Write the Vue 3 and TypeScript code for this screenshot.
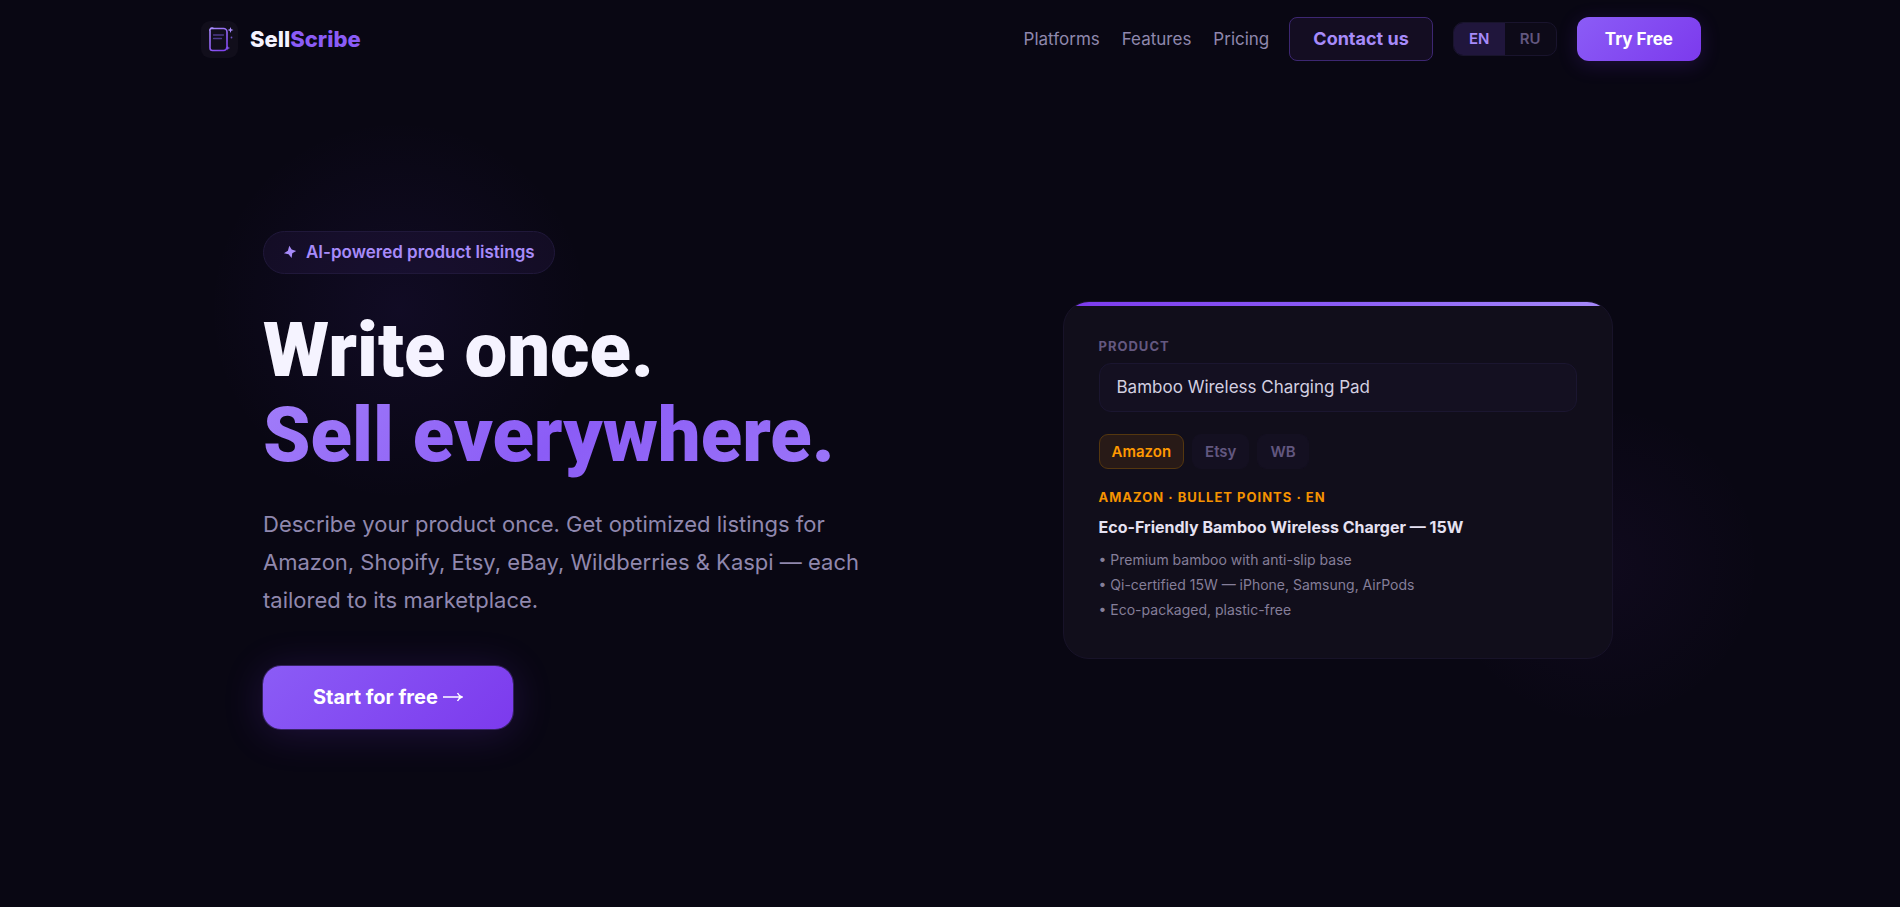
<script setup lang="ts">
import { ref } from 'vue'

type Lang = 'EN' | 'RU'
type Market = 'Amazon' | 'Etsy' | 'WB'

const links: string[] = ['Platforms', 'Features', 'Pricing']
const langs: Lang[] = ['EN', 'RU']
const markets: Market[] = ['Amazon', 'Etsy', 'WB']
const bullets: string[] = [
  'Premium bamboo with anti-slip base',
  'Qi-certified 15W — iPhone, Samsung, AirPods',
  'Eco-packaged, plastic-free',
]

const lang = ref<Lang>('EN')
const market = ref<Market>('Amazon')
const product = ref('Bamboo Wireless Charging Pad')
</script>

<template>
  <div class="page">
    <header class="header">
      <a class="brand" href="#">
        <span class="brand-tile">
          <svg viewBox="0 0 36 36" width="36" height="36" fill="none" aria-hidden="true">
            <defs>
              <linearGradient id="doc" x1="8" y1="6" x2="26" y2="31" gradientUnits="userSpaceOnUse">
                <stop stop-color="#a78bfa" />
                <stop offset="1" stop-color="#7c3aed" />
              </linearGradient>
            </defs>
            <path
              d="M9 7.500H21.500a3.500 3.500 0 0 1 3.500 3.500v15a3.500 3.500 0 0 1-3.500 3.500H10.500A2.500 2.500 0 0 1 8 27V10a2 2 0 0 1 1-2.500z"
              stroke="url(#doc)" stroke-width="1.6"
            />
            <path d="M8.500 8.500C8.500 6.500 11 6.500 11.500 8" stroke="#a78bfa" stroke-width="1.2" />
            <path d="M11.500 14H21.500M11.500 17.500H19.500" stroke="#4c3a8a" stroke-width="1.3" stroke-linecap="round" />
            <path d="M28.500 6l.8 2.200 2.200.8-2.200.8-.8 2.200-.8-2.200-2.200-.8 2.200-.8z" fill="#a78bfa" />
            <path d="M25.800 24.500l.6 1.900 1.900.6-1.900.6-.6 1.900-.6-1.900-1.900-.6 1.900-.6z" fill="#8b5cf6" />
            <circle cx="29.500" cy="16.500" r="0.9" fill="#6d4fc0" />
          </svg>
        </span>
        <span class="brand-name">Sell<span class="brand-accent">Scribe</span></span>
      </a>
      <div class="actions">
        <nav class="nav">
          <a v-for="link in links" :key="link" :href="'#' + link.toLowerCase()">{{ link }}</a>
        </nav>
        <a class="contact" href="#contact">Contact us</a>
        <div class="langs" role="group" aria-label="Language">
          <button
            v-for="item in langs" :key="item" type="button"
            :class="{ active: lang === item }" :aria-pressed="lang === item" @click="lang = item"
          >{{ item }}</button>
        </div>
        <a class="try" href="#start">Try Free</a>
      </div>
    </header>

    <main class="hero">
      <section class="intro">
        <p class="badge">
          <svg viewBox="0 0 14 14" width="14" height="14" aria-hidden="true">
            <path d="M6.300.8L8.700 4.600 13.200 6 9.300 8.200 8.600 13 5.600 9.300.9 8.300 4.900 5.700z" fill="#a78bfa" />
          </svg>
          <span>AI-powered product listings</span>
        </p>
        <h1>
          <span class="line">Write once.</span>
          <span class="line gradient">Sell everywhere.</span>
        </h1>
        <p class="lead">
          Describe your product once. Get optimized listings for Amazon, Shopify, Etsy, eBay,
          Wildberries &amp; Kaspi — each tailored to its marketplace.
        </p>
        <a class="cta" href="#start">
          <span>Start for free</span>
          <svg viewBox="0 0 20 12" width="20" height="12" fill="none" stroke="currentColor" stroke-width="1.4" aria-hidden="true">
            <path d="M0 6H18.500M14.500 2C15.500 4 16.800 5.400 19 6 16.800 6.600 15.500 8 14.500 10" />
          </svg>
        </a>
      </section>

      <section class="card">
        <label class="label" for="product">PRODUCT</label>
        <input id="product" v-model="product" class="field" type="text" />
        <div class="markets" role="group" aria-label="Marketplace">
          <button
            v-for="item in markets" :key="item" type="button"
            :class="{ active: market === item }" :aria-pressed="market === item" @click="market = item"
          >{{ item }}</button>
        </div>
        <p class="format">AMAZON · BULLET POINTS · EN</p>
        <h2>Eco-Friendly Bamboo Wireless Charger — 15W</h2>
        <ul>
          <li v-for="text in bullets" :key="text">• {{ text }}</li>
        </ul>
      </section>
    </main>
  </div>
</template>

<style>
body {
  margin: 0;
  background: #090713;
}
</style>

<style scoped>
.page {
  box-sizing: border-box;
  min-height: 100vh;
  display: flex;
  flex-direction: column;
  background: #090713;
  color: #f5f3ff;
  font-family: Inter, "Liberation Sans", sans-serif;
}

a {
  color: inherit;
  text-decoration: none;
}

button {
  margin: 0;
  border: 0;
  background: none;
  font-family: inherit;
  cursor: pointer;
}

.header {
  box-sizing: border-box;
  width: 100%;
  max-width: 1548px;
  margin: 0 auto;
  padding: 17px 23px 17px 25px;
  display: flex;
  align-items: center;
  justify-content: space-between;
}

.brand {
  display: flex;
  align-items: center;
  gap: 12px;
}

.brand-tile {
  width: 37px;
  height: 37px;
  border-radius: 9px;
  background: #110e1b;
  display: grid;
  place-items: center;
}

.brand-name {
  font-size: 22px;
  line-height: 28px;
  font-weight: 800;
}

.brand-accent {
  color: #8b5cf6;
}

.actions {
  display: flex;
  align-items: center;
  gap: 20px;
}

.nav {
  display: flex;
  gap: 22px;
  font-size: 17px;
  line-height: 24px;
  color: #8f87ad;
}

.contact {
  padding: 9px 23px;
  border: 1px solid #3d2772;
  border-radius: 8px;
  background: #140d22;
  color: #a78bfa;
  font-size: 18px;
  line-height: 24px;
  font-weight: 700;
}

.langs {
  display: flex;
  border: 1px solid #19142d;
  border-radius: 10px;
  overflow: hidden;
  background: #0d0a18;
}

.langs button {
  width: 51px;
  padding: 0;
  color: #62577f;
  font-size: 15px;
  line-height: 32px;
  font-weight: 600;
}

.langs .active {
  background: #20163c;
  color: #a78bfa;
}

.try {
  padding: 10px 28px;
  border-radius: 12px;
  background: linear-gradient(135deg, #8b5cf6, #7c3aed);
  box-shadow: 0 4px 20px rgba(124, 58, 237, 0.18);
  color: #fff;
  font-size: 17px;
  line-height: 24px;
  font-weight: 700;
}

.hero {
  position: relative;
  box-sizing: border-box;
  flex: 1;
  width: 100%;
  max-width: 1422px;
  margin: 0 auto;
  padding: 24px 24px 50px;
  display: grid;
  grid-template-columns: 1fr 1fr;
  gap: 176px;
  align-items: center;
  isolation: isolate;
}

.hero::before,
.hero::after {
  content: "";
  position: absolute;
  z-index: -1;
  border-radius: 50%;
}

.hero::before {
  left: -30px;
  top: 42px;
  width: 380px;
  height: 380px;
  background: radial-gradient(closest-side, rgba(109, 60, 237, 0.08), transparent);
}

.hero::after {
  right: -100px;
  bottom: 182px;
  width: 320px;
  height: 320px;
  background: radial-gradient(closest-side, rgba(139, 60, 220, 0.05), transparent);
}

.intro {
  display: flex;
  flex-direction: column;
  align-items: flex-start;
}

.badge {
  margin: 0 0 34px;
  padding: 9px 19px;
  border: 1px solid #20183a;
  border-radius: 24px;
  background: rgba(139, 92, 246, 0.07);
  display: flex;
  align-items: center;
  gap: 9px;
  color: #a78bfa;
  font-size: 17px;
  line-height: 23px;
  font-weight: 600;
}

h1 {
  width: 100%;
  margin: 0 0 27px;
  font-family: Roboto, "Liberation Sans", sans-serif;
  font-size: 76px;
  line-height: 85px;
  font-weight: 900;
}

.line {
  display: block;
}

.gradient {
  background: linear-gradient(135deg, #a17df9, #8b5cf6 50%, #9d78f9);
  background-clip: text;
  -webkit-background-clip: text;
  color: transparent;
}

.lead {
  margin: 0 0 47px;
  color: #9088ae;
  font-size: 22px;
  line-height: 38px;
}

.cta {
  padding: 18px 50px;
  border-radius: 18px;
  background: linear-gradient(135deg, #8b5cf6, #7c3aed);
  box-shadow: 0 0 0 1px rgba(139, 92, 246, 0.3), 0 4px 40px rgba(124, 58, 237, 0.2);
  display: flex;
  align-items: center;
  gap: 5px;
  color: #fff;
  font-size: 20px;
  line-height: 27px;
  font-weight: 700;
}

.card {
  position: relative;
  box-sizing: border-box;
  width: 100%;
  max-width: 550px;
  margin: 0 auto;
  padding: 35px 35px 36px;
  border: 1px solid #181329;
  border-radius: 26px;
  overflow: hidden;
  background: #110e1b;
}

.card::before {
  content: "";
  position: absolute;
  inset: 0 0 auto;
  height: 4px;
  background: linear-gradient(90deg, #7c3aed, #8b5cf6 50%, #a78bfa);
}

.label {
  display: block;
  margin-bottom: 8px;
  color: #645880;
  font-size: 13px;
  line-height: 18px;
  font-weight: 700;
  letter-spacing: 1px;
}

.field {
  box-sizing: border-box;
  width: 100%;
  margin: 0 0 22px;
  padding: 11px 17px;
  border: 1px solid #1b1630;
  border-radius: 12px;
  outline: none;
  background: #141021;
  color: #d3cfe0;
  font-family: inherit;
  font-size: 17px;
  line-height: 25px;
}

.markets {
  display: flex;
  gap: 8px;
  margin-bottom: 19px;
}

.markets button {
  padding: 5px 12px;
  border: 1px solid #141021;
  border-radius: 9px;
  background: #141021;
  color: #62577f;
  font-size: 15px;
  line-height: 23px;
  font-weight: 600;
}

.markets .active {
  border-color: #55370f;
  background: #281a17;
  color: #ff9900;
}

.format {
  margin: 0 0 9px;
  color: #f59300;
  font-size: 13px;
  line-height: 18px;
  font-weight: 700;
  letter-spacing: 1px;
}

h2 {
  margin: 0 0 8px;
  color: #e5e1f2;
  font-size: 16px;
  line-height: 24px;
  font-weight: 700;
}

ul {
  margin: 0;
  padding: 0;
  list-style: none;
  color: #857e99;
  font-size: 14px;
  line-height: 25px;
}
</style>
